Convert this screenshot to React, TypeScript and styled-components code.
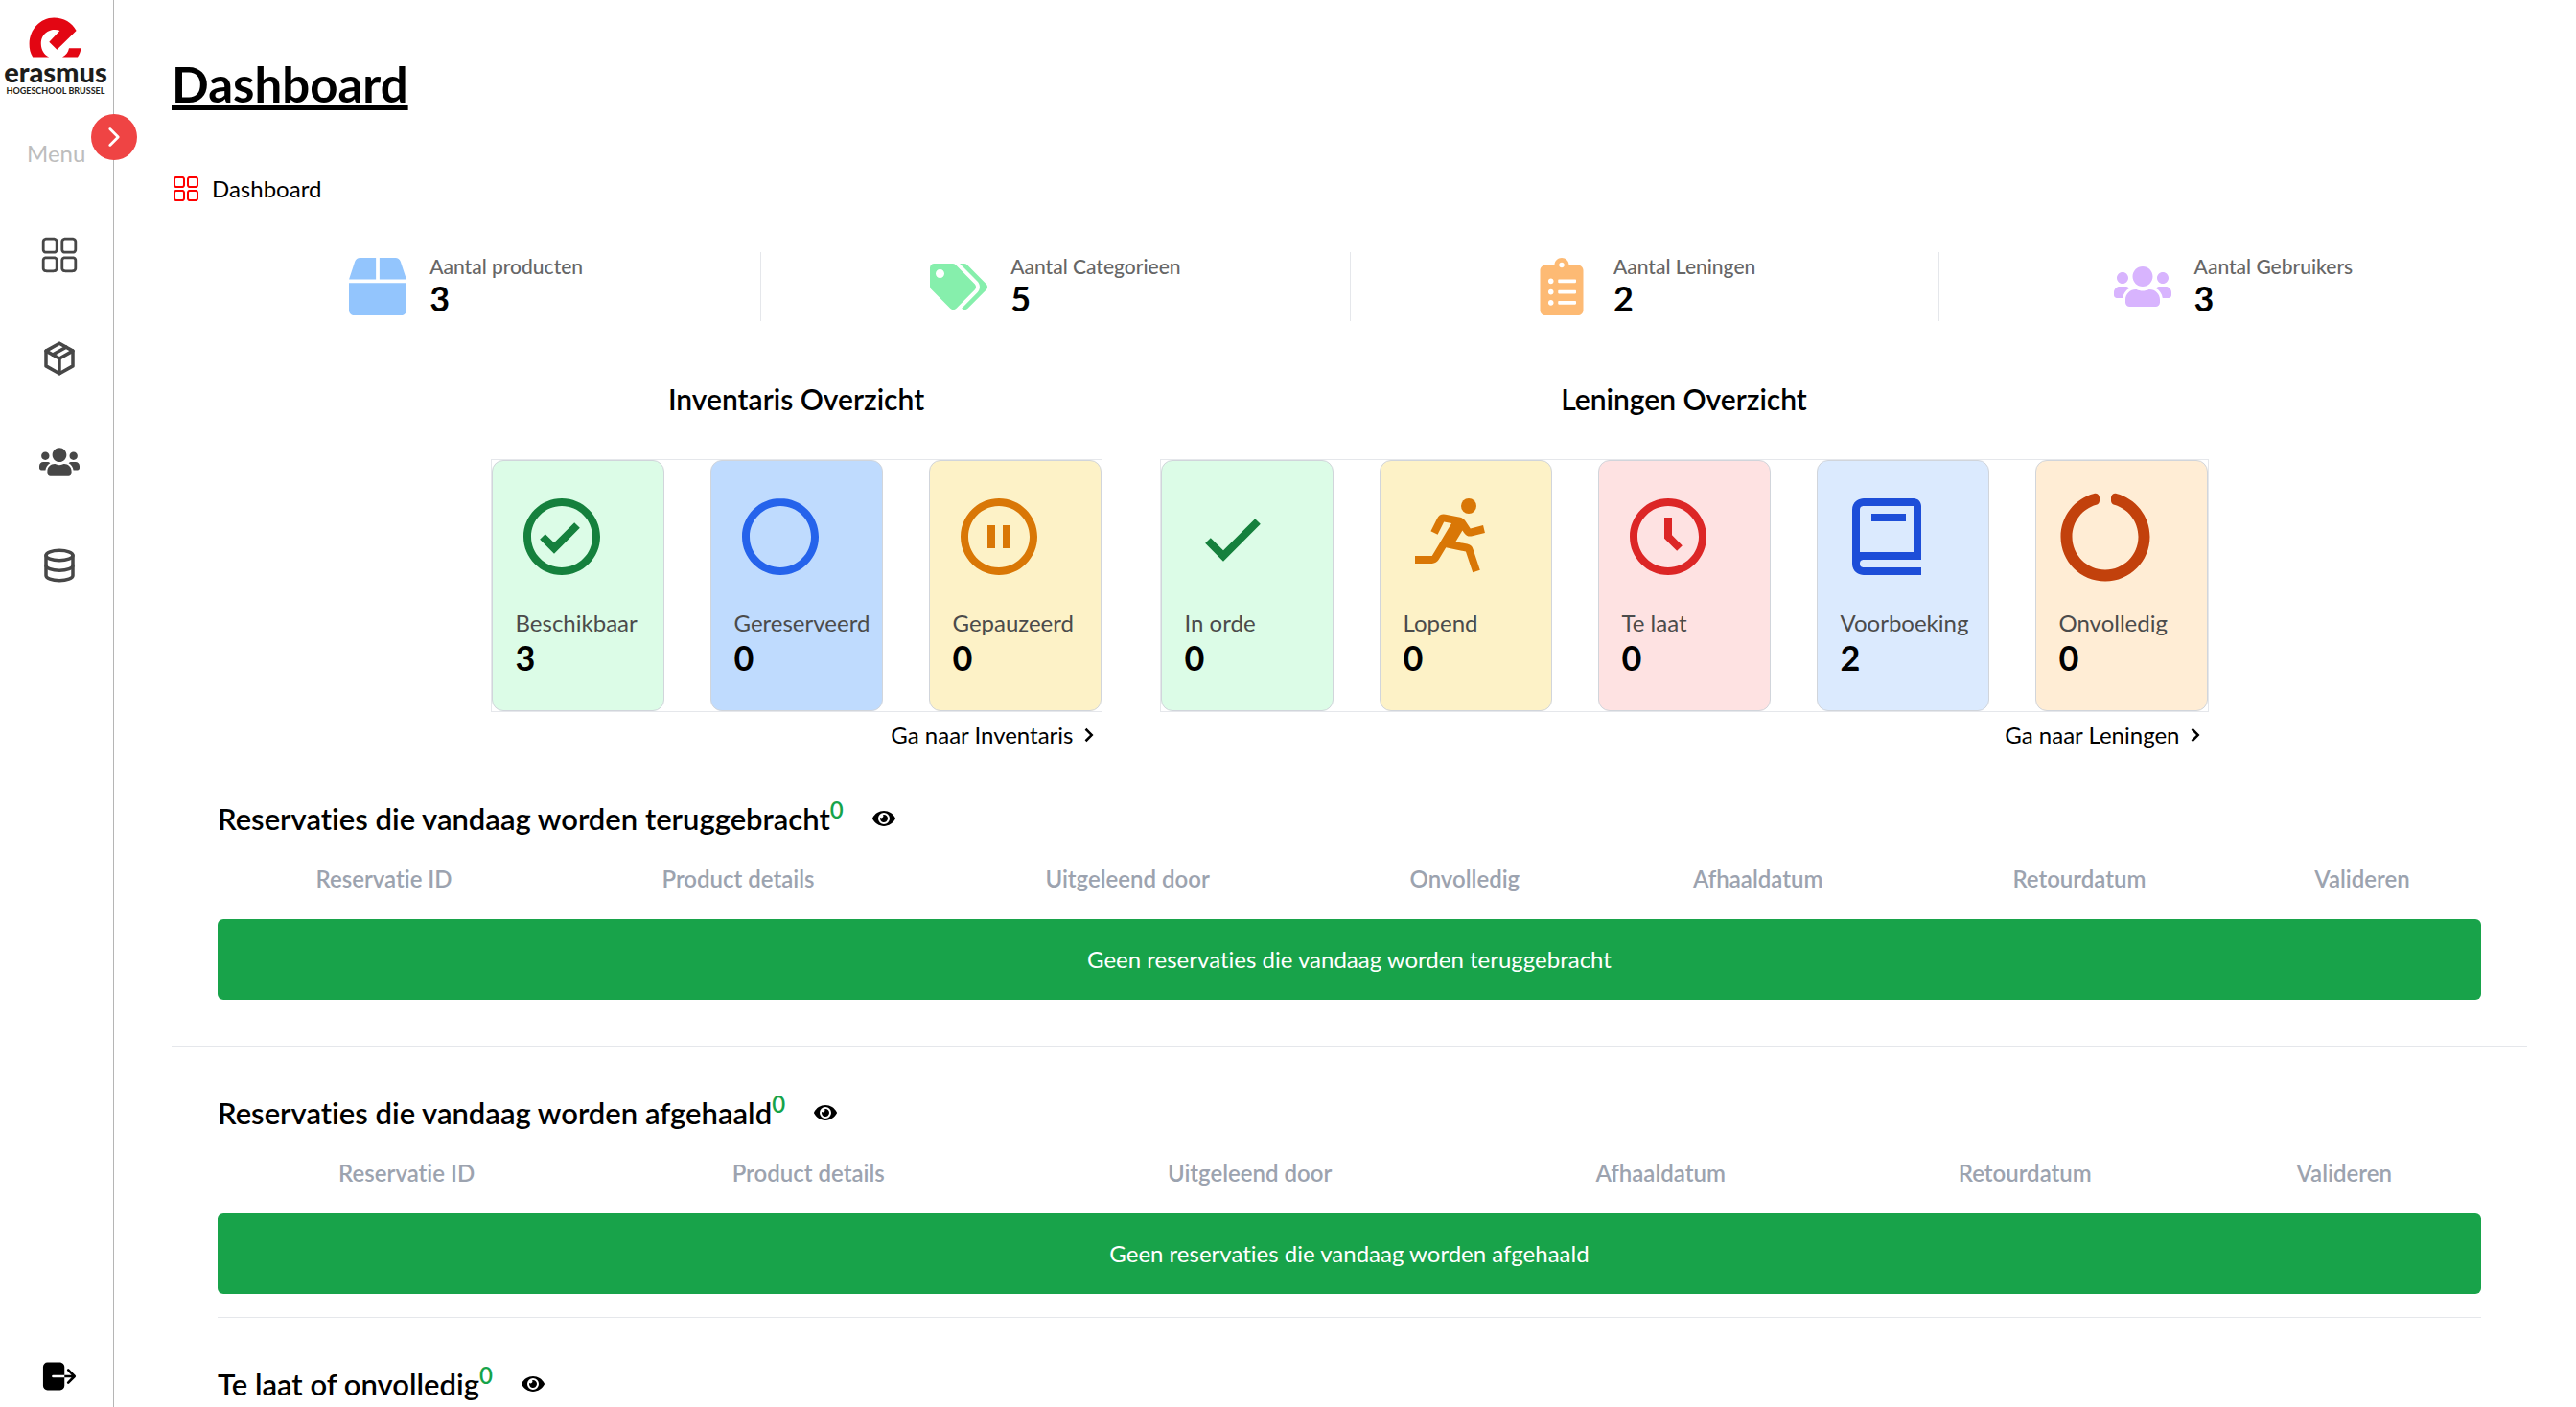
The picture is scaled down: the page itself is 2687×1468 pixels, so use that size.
import React from "react";
import styled, { createGlobalStyle } from "styled-components";
import { RxDashboard } from "react-icons/rx";
import { TbDatabase, TbPackage } from "react-icons/tb";
import {
  FaBox,
  FaCircleNotch,
  FaClipboardList,
  FaEye,
  FaTags,
  FaUsers,
} from "react-icons/fa";
import {
  BiBook,
  BiCheck,
  BiCheckCircle,
  BiChevronRight,
  BiCircle,
  BiPauseCircle,
  BiRun,
  BiTimeFive,
} from "react-icons/bi";
import { IoLogOut } from "react-icons/io5";
import { IoIosArrowForward } from "react-icons/io";

const GlobalStyle = createGlobalStyle`
  *, *::before, *::after { box-sizing: border-box; }
  body {
    margin: 0;
    background: #fff;
    color: #000;
    font-family: Lato, "Open Sans", sans-serif;
    font-size: 24px;
    font-variant-ligatures: none;
    line-height: 36px;
  }
  h1, h2, h3, p { margin: 0; }
  a { color: inherit; text-decoration: none; }
  svg { display: block; flex-shrink: 0; }
`;

const Shell = styled.div`
  display: flex;
  height: 100vh;
  overflow: hidden;
`;

const Sidebar = styled.aside`
  position: relative;
  display: flex;
  flex-direction: column;
  flex: 0 0 119px;
  border-right: 1px solid #b5b5b5;
`;

const Brand = styled.a`
  display: flex;
  flex-direction: column;
  align-items: center;
  height: 107px;
  padding: 18px 2px 0 0;
  color: #1d1d1b;
`;

const BrandName = styled.span`
  font-size: 29px;
  font-weight: 900;
  line-height: 30px;
`;

const BrandSub = styled.span`
  font-size: 9px;
  font-weight: 700;
  line-height: 10px;
  white-space: nowrap;
`;

const Toggle = styled.button`
  position: absolute;
  top: 119px;
  right: -25px;
  display: flex;
  align-items: center;
  justify-content: center;
  width: 48px;
  height: 48px;
  padding: 0;
  border: 0;
  border-radius: 50%;
  background: #ef4444;
  color: #fff;
  cursor: pointer;
`;

const MenuTitle = styled.p`
  padding: 35px 0 34px 28px;
  color: #bdbdbd;
`;

const Nav = styled.nav`
  display: flex;
  flex-direction: column;
  flex: 1;
`;

const NavLink = styled.a`
  display: flex;
  align-items: center;
  justify-content: center;
  height: 108px;
  padding-left: 6px;
  color: #474747;
`;

const Logout = styled.button`
  display: flex;
  justify-content: center;
  padding: 0 0 11px 6px;
  border: 0;
  background: none;
  color: #000;
  cursor: pointer;
`;

const Main = styled.main`
  flex: 1;
  min-width: 0;
  padding: 58px 51px 0 60px;
`;

const PageTitle = styled.h1`
  font-size: 51px;
  font-weight: 700;
  line-height: 60px;
  text-decoration: underline;
  text-decoration-thickness: 5px;
  text-decoration-skip-ink: none;
  text-underline-offset: 3px;
`;

const Breadcrumb = styled.nav`
  display: flex;
  align-items: center;
  gap: 12px;
  margin-top: 61px;

  svg { color: #f00; }
`;

const Stats = styled.section`
  display: grid;
  grid-template-columns: repeat(4, 1fr);
  margin-top: 48px;
`;

const Stat = styled.div`
  display: flex;
  align-items: center;
  justify-content: center;
  gap: 24px;
  height: 72px;

  & + & { border-left: 1px solid #e5e7eb; }
`;

const StatText = styled.div`
  padding-bottom: 6px;
`;

const StatLabel = styled.p`
  color: #666;
  font-size: 21px;
  font-weight: 500;
  line-height: 30px;
`;

const Amount = styled.p`
  font-size: 36px;
  font-weight: 700;
  line-height: 36px;
`;

const Overviews = styled.div`
  display: flex;
  justify-content: center;
  gap: 60px;
  margin-top: 63px;
`;

const Overview = styled.section`
  display: flex;
  flex-direction: column;
`;

const OverviewTitle = styled.h2`
  font-size: 30px;
  font-weight: 600;
  line-height: 36px;
  text-align: center;
`;

const Cards = styled.div`
  display: flex;
  gap: 48px;
  margin-top: 45px;
  border: 1px solid #e5e7eb;
`;

const Card = styled.div<{ $bg: string }>`
  width: 180px;
  height: 262px;
  padding: 31px 24px;
  border: 1px solid #d1d5db;
  border-radius: 12px;
  background: ${(p) => p.$bg};
`;

const CardLabel = styled.p`
  margin-top: 24px;
  color: #4b4b4b;
  white-space: nowrap;
`;

const MoreLink = styled.a`
  display: flex;
  align-items: center;
  align-self: flex-end;
  margin-top: 6px;
`;

const Reservations = styled.section`
  padding: 0 48px;
`;

const SectionHeader = styled.div`
  display: flex;
  align-items: center;
  gap: 30px;
  height: 36px;
`;

const SectionTitle = styled.h3`
  display: flex;
  font-size: 31px;
  font-weight: 600;
  line-height: 36px;
`;

const Count = styled.sup`
  color: #16a34a;
  font-size: 24px;
  font-weight: 600;
  line-height: 18px;
`;

const EyeButton = styled.button`
  padding: 0;
  border: 0;
  background: none;
  color: #000;
  cursor: pointer;
`;

const Table = styled.table`
  width: 100%;
  margin-top: 27px;
  border-spacing: 0;
  table-layout: fixed;
`;

const HeadCell = styled.th<{ $share: number }>`
  width: ${(p) => p.$share}%;
  padding: 0 0 24px;
  color: #9ca3af;
  font-weight: 600;
  text-align: center;
`;

const EmptyCell = styled.td`
  padding: 24px;
  border-radius: 6px;
  background: #18a34a;
  color: #fff;
  text-align: center;
`;

const Divider = styled.hr<{ $before: number; $inset?: boolean }>`
  height: 1px;
  margin: ${(p) => p.$before}px ${(p) => (p.$inset ? 48 : 0)}px 51px;
  border: 0;
  background: #e5e7eb;
`;

const FirstReservations = styled.div`
  margin-top: 51px;
`;

type IconType = React.ComponentType<{ size?: number; color?: string }>;

const navItems: { label: string; icon: IconType }[] = [
  { label: "Dashboard", icon: RxDashboard },
  { label: "Inventaris", icon: TbPackage },
  { label: "Gebruikers", icon: FaUsers },
  { label: "Data", icon: TbDatabase },
];

const stats: { label: string; value: number; icon: IconType; color: string }[] = [
  { label: "Aantal producten", value: 3, icon: FaBox, color: "#93c5fd" },
  { label: "Aantal Categorieen", value: 5, icon: FaTags, color: "#86efac" },
  { label: "Aantal Leningen", value: 2, icon: FaClipboardList, color: "#fdba74" },
  { label: "Aantal Gebruikers", value: 3, icon: FaUsers, color: "#d8b4fe" },
];

type CardData = { label: string; value: number; icon: IconType; color: string; bg: string };

const inventoryCards: CardData[] = [
  { label: "Beschikbaar", value: 3, icon: BiCheckCircle, color: "#15803d", bg: "#dcfce7" },
  { label: "Gereserveerd", value: 0, icon: BiCircle, color: "#2563eb", bg: "#bfdbfe" },
  { label: "Gepauzeerd", value: 0, icon: BiPauseCircle, color: "#d97706", bg: "#fdf2c7" },
];

const loanCards: CardData[] = [
  { label: "In orde", value: 0, icon: BiCheck, color: "#15803d", bg: "#dcfce7" },
  { label: "Lopend", value: 0, icon: BiRun, color: "#d97706", bg: "#fdf2c7" },
  { label: "Te laat", value: 0, icon: BiTimeFive, color: "#dc2626", bg: "#fee2e2" },
  { label: "Voorboeking", value: 2, icon: BiBook, color: "#1d4ed8", bg: "#dbeafe" },
  { label: "Onvolledig", value: 0, icon: FaCircleNotch, color: "#c2410c", bg: "#ffedd5" },
];

type Column = [label: string, share: number];

const returnColumns: Column[] = [
  ["Reservatie ID", 14.7],
  ["Product details", 16.6],
  ["Uitgeleend door", 17.8],
  ["Onvolledig", 12],
  ["Afhaaldatum", 13.9],
  ["Retourdatum", 14.5],
  ["Valideren", 10.5],
];

const pickupColumns: Column[] = [
  ["Reservatie ID", 16.7],
  ["Product details", 18.8],
  ["Uitgeleend door", 20.2],
  ["Afhaaldatum", 16.1],
  ["Retourdatum", 16.1],
  ["Valideren", 12.1],
];

function LogoMark() {
  return (
    <svg width="56" height="42" viewBox="31 18 56 42" fill="#e30613" aria-hidden="true">
      <path d="M35.2 59.5C32.6 55.5 31.5 50.5 31.6 45.5C31.9 30.5 43 18.6 57.2 18.5C67.5 18.5 76 23.5 80.6 32L60.4 51.8L52.3 43.8L63.4 32C59.5 30.4 54.5 30.6 50.5 33C45.8 35.8 43.6 40.5 43.8 46C44 52 46.8 57 52.2 59.5Z" />
      <path d="M73 50.3H85.6C85.1 53.6 83.8 57 82 59.5H66C69.8 57.5 72.2 54.4 73 50.3Z" />
    </svg>
  );
}

function OverviewPanel({ title, cards, link }: { title: string; cards: CardData[]; link: string }) {
  return (
    <Overview>
      <OverviewTitle>{title}</OverviewTitle>
      <Cards>
        {cards.map(({ label, value, icon: Icon, color, bg }) => (
          <Card key={label} $bg={bg}>
            <Icon size={96} color={color} />
            <CardLabel>{label}</CardLabel>
            <Amount>{value}</Amount>
          </Card>
        ))}
      </Cards>
      <MoreLink href="#">
        {link}
        <BiChevronRight size={30} />
      </MoreLink>
    </Overview>
  );
}

function ReservationList({ title, columns, empty }: { title: string; columns?: Column[]; empty?: string }) {
  return (
    <Reservations>
      <SectionHeader>
        <SectionTitle>
          {title}
          <Count>0</Count>
        </SectionTitle>
        <EyeButton type="button" aria-label={`Toon ${title}`}>
          <FaEye size={24} />
        </EyeButton>
      </SectionHeader>
      {columns && (
        <Table>
          <thead>
            <tr>
              {columns.map(([label, share]) => (
                <HeadCell key={label} $share={share} scope="col">
                  {label}
                </HeadCell>
              ))}
            </tr>
          </thead>
          <tbody>
            <tr>
              <EmptyCell colSpan={columns.length}>{empty}</EmptyCell>
            </tr>
          </tbody>
        </Table>
      )}
    </Reservations>
  );
}

export default function App() {
  return (
    <>
      <GlobalStyle />
      <Shell>
        <Sidebar>
          <Brand href="#">
            <LogoMark />
            <BrandName>erasmus</BrandName>
            <BrandSub>HOGESCHOOL BRUSSEL</BrandSub>
          </Brand>
          <Toggle type="button" aria-label="Menu openen">
            <IoIosArrowForward size={30} />
          </Toggle>
          <MenuTitle>Menu</MenuTitle>
          <Nav>
            {navItems.map(({ label, icon: Icon }) => (
              <NavLink key={label} href="#" aria-label={label}>
                <Icon size={42} />
              </NavLink>
            ))}
          </Nav>
          <Logout type="button" aria-label="Afmelden">
            <IoLogOut size={42} />
          </Logout>
        </Sidebar>
        <Main>
          <PageTitle>Dashboard</PageTitle>
          <Breadcrumb>
            <RxDashboard size={30} />
            <a href="#">Dashboard</a>
          </Breadcrumb>
          <Stats>
            {stats.map(({ label, value, icon: Icon, color }) => (
              <Stat key={label}>
                <Icon size={60} color={color} />
                <StatText>
                  <StatLabel>{label}</StatLabel>
                  <Amount>{value}</Amount>
                </StatText>
              </Stat>
            ))}
          </Stats>
          <Overviews>
            <OverviewPanel title="Inventaris Overzicht" cards={inventoryCards} link="Ga naar Inventaris" />
            <OverviewPanel title="Leningen Overzicht" cards={loanCards} link="Ga naar Leningen" />
          </Overviews>
          <FirstReservations>
            <ReservationList
              title="Reservaties die vandaag worden teruggebracht"
              columns={returnColumns}
              empty="Geen reservaties die vandaag worden teruggebracht"
            />
          </FirstReservations>
          <Divider $before={48} />
          <ReservationList
            title="Reservaties die vandaag worden afgehaald"
            columns={pickupColumns}
            empty="Geen reservaties die vandaag worden afgehaald"
          />
          <Divider $before={24} $inset />
          <ReservationList title="Te laat of onvolledig" />
        </Main>
      </Shell>
    </>
  );
}
